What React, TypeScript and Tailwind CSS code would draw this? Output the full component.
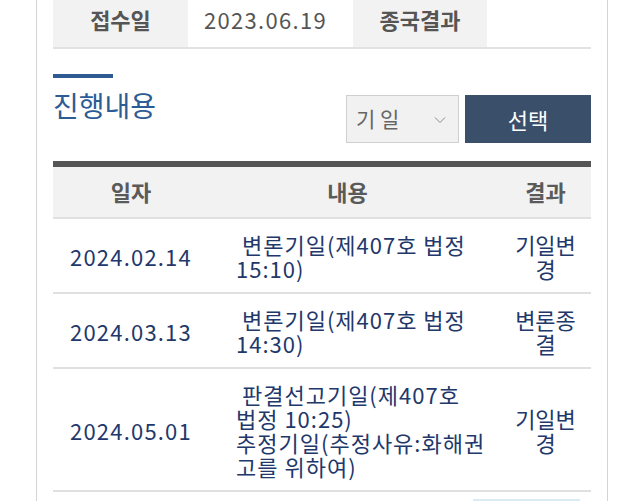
import React from 'react';

const font = { fontFamily: '"Noto Sans CJK KR", "Noto Sans", sans-serif' };

type Row = { date: string; content: string[]; result: string[] };

const rows: Row[] = [
  { date: '2024.02.14', content: ['\u00a0변론기일(제407호 법정', '15:10)'], result: ['기일변', '경'] },
  { date: '2024.03.13', content: ['\u00a0변론기일(제407호 법정', '14:30)'], result: ['변론종', '결'] },
  {
    date: '2024.05.01',
    content: ['\u00a0판결선고기일(제407호', '법정 10:25)', '추정기일(추정사유:화해권', '고를 위하여)'],
    result: ['기일변', '경'],
  },
];

export default function App() {
  return (
    <div className="w-[644px] h-[501px] overflow-hidden bg-white" style={font}>
      <div className="ml-[36px] w-[572px] min-h-[501px] border-x border-[#d4d4d4] px-[16px]">
        {/* 사건 기본정보 (top row, partly scrolled off) */}
        <div className="flex h-[49px] border-b-2 border-[#e2e2e2] text-[22px] text-[#555]">
          <div className="w-[135px] bg-[#f2f2f2] flex items-center justify-center pb-[8px] font-bold">접수일</div>
          <div className="w-[165px] flex items-center pl-[16px] pb-[8px] tracking-[1.3px]">2023.06.19</div>
          <div className="w-[134px] bg-[#f2f2f2] flex items-center justify-center pb-[8px] font-bold">종국결과</div>
          <div className="flex-1" />
        </div>

        {/* 진행내용 heading + filter */}
        <div className="flex items-start justify-between pt-[25px]">
          <div>
            <div className="w-[60px] h-[4px] bg-[#2f5b92]" />
            <h2 className="mt-[11px] text-[28px] leading-[32px] text-[#2c5c96]">진행내용</h2>
          </div>
          <div className="flex gap-[6px] mt-[21px]">
            <div className="w-[113px] h-[48px] border border-[#cfcfcf] bg-[#f1f1f1] flex items-center justify-between pl-[9px] pr-[12px]">
              <span className="text-[21px] text-[#666]">기 일</span>
              <svg width="12" height="8" viewBox="0 0 12 8" className="mt-[2px]">
                <polyline points="1,1.5 6,6.5 11,1.5" fill="none" stroke="#8a8a8a" strokeWidth="1" />
              </svg>
            </div>
            <button className="w-[126px] h-[48px] bg-[#3a4f69] text-white text-[22px] flex items-center justify-center">
              선택
            </button>
          </div>
        </div>

        {/* 진행내용 table */}
        <div className="mt-[18px] border-t-[6px] border-[#555]">
          <div className="grid grid-cols-[156px_291px_1fr] h-[52px] bg-[#f2f2f2] border-b-2 border-[#e0e0e0] text-[22px] font-bold text-[#5a5a5a] items-center pb-[2px]">
            <div className="text-center">일자</div>
            <div className="text-center pr-[14px]">내용</div>
            <div className="text-center">결과</div>
          </div>
          {rows.map((r) => (
            <div
              key={r.date}
              className="grid grid-cols-[156px_291px_1fr] border-b-2 border-[#e0e0e0] py-[12.5px] text-[22px] leading-[24px] text-[#22386b] items-center"
            >
              <div className="text-center tracking-[1.2px]">{r.date}</div>
              <div className="pl-[27px] pr-[4px] whitespace-nowrap tracking-[1px]">
                {r.content.map((l, i) => (
                  <div key={i}>{l}</div>
                ))}
              </div>
              <div className="text-center">
                {r.result.map((l, i) => (
                  <div key={i}>{l}</div>
                ))}
              </div>
            </div>
          ))}
          <div className="flex justify-end pr-[11px] pt-[7px]">
            <div className="w-[107px] h-[6px] bg-[#d9ecf3]" />
          </div>
        </div>
      </div>
    </div>
  );
}
